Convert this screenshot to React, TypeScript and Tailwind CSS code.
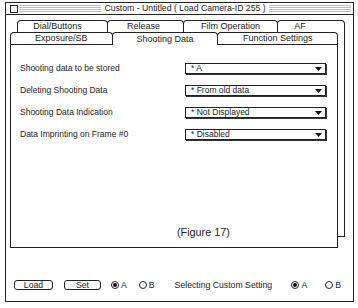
const rows = [
  { label: 'Shooting data to be stored', value: '* A' },
  { label: 'Deleting Shooting Data', value: '* From old data' },
  { label: 'Shooting Data Indication', value: '* Not Displayed' },
  { label: 'Data Imprinting on Frame #0', value: '* Disabled' },
];

const backTabs = [
  { label: 'Dial/Buttons', w: 'w-[91px]', pad: 'pr-[10px]' },
  { label: 'Release', w: 'w-[77px]', pad: 'pr-[4px]' },
  { label: 'Film Operation', w: 'w-[95px]', pad: '' },
  { label: 'AF', w: 'w-[68px]', pad: 'pr-[22px]' },
];

const frontTabs = [
  { label: 'Exposure/SB', w: 'w-[103px]', active: false },
  { label: 'Shooting Data', w: 'w-[107px]', active: true },
  { label: 'Function Settings', w: 'w-[121px]', active: false },
];

function Popup({ value }: { value: string }) {
  return (
    <div className="flex h-[11px] w-[141px] items-center justify-between border border-[#222] bg-white pl-[5px] pr-[3px] shadow-[1px_1px_0_#333]">
      <span className="text-[8.5px] leading-none">{value}</span>
      <svg width="7" height="4" viewBox="0 0 7 4">
        <path d="M0 0h7L3.5 4z" fill="#111" />
      </svg>
    </div>
  );
}

function Radio({ on, label }: { on?: boolean; label: string }) {
  return (
    <div className="flex items-center gap-[2px]">
      <span className="flex h-[8px] w-[8px] items-center justify-center rounded-full border border-[#222]">
        {on && <span className="h-[4px] w-[4px] rounded-full bg-[#111]" />}
      </span>
      <span className="leading-none">{label}</span>
    </div>
  );
}

function Stripes() {
  return (
    <div className="h-[8px] flex-1 bg-[repeating-linear-gradient(to_bottom,#bbb_0px,#bbb_1px,#fff_1px,#fff_2px)]" />
  );
}

export default function App() {
  return (
    <div className="h-[308px] w-[358px] bg-white pl-[5px] pt-[2px] font-['Liberation_Sans',Arial,sans-serif] text-[#222]">
      <div className="flex h-[300px] w-[349px] flex-col border border-[#222]">
        {/* title bar */}
        <div className="flex h-[12px] items-center border-b border-[#222]">
          <div className="ml-[4px] mr-[1px] h-[8px] w-[8px] border border-[#222] bg-white" />
          <Stripes />
          <span className="px-[3px] text-[8.7px] leading-none">Custom - Untitled ( Load Camera-ID 255 )</span>
          <Stripes />
          <div className="w-[2px]" />
        </div>

        {/* tab sets */}
        <div className="ml-[11px] mt-[5px] w-[328px]">
          <div className="flex h-[12px]">
            {backTabs.map((t, i) => (
              <div
                key={t.label}
                className={`${t.w} ${t.pad} ${i > 0 ? '-ml-px' : ''} flex items-center justify-center rounded-t-[4px] border-l border-r border-t border-[#222] text-[9px] leading-none`}
              >
                {t.label}
              </div>
            ))}
          </div>

          <div className="h-[205px] border-b border-r border-[#222]">
            <div className="-ml-[7px] w-[328px]">
              <div className="flex h-[12px] items-end">
                {frontTabs.map((t, i) => (
                  <div
                    key={t.label}
                    className={`${t.w} ${i > 0 ? '-ml-px' : ''} flex items-center justify-center rounded-t-[4px] border-l border-r border-t border-[#222] text-[9px] leading-none ${
                      t.active ? 'relative z-10 -mb-px h-[13px] bg-white' : 'h-[12px]'
                    }`}
                  >
                    {t.label}
                  </div>
                ))}
              </div>

              <div className="flex h-[204px] flex-col border border-[#222] bg-white pl-[9px] pr-[11px] pt-[18px]">
                <div className="flex flex-col gap-[11px]">
                  {rows.map((r) => (
                    <div key={r.label} className="flex h-[11px] items-center justify-between">
                      <span className="text-[8.5px] leading-none">{r.label}</span>
                      <Popup value={r.value} />
                    </div>
                  ))}
                </div>
                <div className="mt-auto pb-[9px] pl-[157px] text-[10.8px] leading-[12px]">(Figure 17)</div>
              </div>
            </div>
          </div>
        </div>

        {/* bottom bar */}
        <div className="mb-[10px] mt-auto flex h-[12px] items-center pl-[8px] text-[8.7px]">
          <div className="flex h-[10px] w-[39px] items-center justify-center rounded-[3px] border border-[#222] leading-none">
            Load
          </div>
          <div className="ml-[11px] flex h-[10px] w-[37px] items-center justify-center rounded-[3px] border border-[#222] leading-none">
            Set
          </div>
          <div className="ml-[10px]">
            <Radio on label="A" />
          </div>
          <div className="ml-[12px]">
            <Radio label="B" />
          </div>
          <span className="ml-[20px] leading-none">Selecting Custom Setting</span>
          <div className="ml-auto">
            <Radio on label="A" />
          </div>
          <div className="ml-[18px] mr-[12px]">
            <Radio label="B" />
          </div>
        </div>
      </div>
    </div>
  );
}
